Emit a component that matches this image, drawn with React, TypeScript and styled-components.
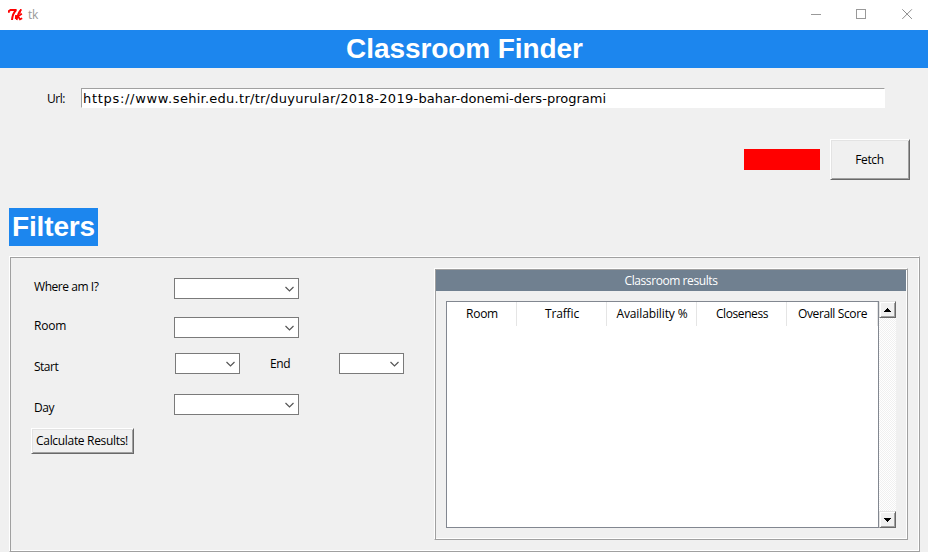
import React from "react";
import styled, { createGlobalStyle, css } from "styled-components";

const BLUE = "#1c86ee";
const FACE = "#f0f0f0";
const SHADOW = "#a0a0a0";

const GlobalStyle = createGlobalStyle`
  * { box-sizing: border-box; }
  body {
    margin: 0;
    background: ${FACE};
    color: #000;
    font: 12px/16px "Open Sans", "Noto Sans", sans-serif;
    overflow: hidden;
  }
`;

const raised = css`
  border: 1px solid;
  border-color: #fff #696969 #696969 #fff;
  box-shadow: inset 1px 1px 0 #e3e3e3, inset -1px -1px 0 ${SHADOW};
  background: ${FACE};
`;

const Window = styled.div`
  display: flex;
  flex-direction: column;
  width: 928px;
  height: 552px;
  background: ${FACE};
  overflow: hidden;
`;

const TitleBar = styled.header`
  display: flex;
  align-items: center;
  flex: none;
  height: 30px;
  padding: 0 15px 0 8px;
  background: #fff;
  color: #999;
`;

const TitleText = styled.span`
  flex: 1;
  margin-left: 5px;
  font-size: 12px;
  letter-spacing: -0.2px;
`;

const WindowControls = styled.div`
  display: grid;
  grid-template-columns: 45px 46px 11px;
  margin-top: -2px;
`;

const Banner = styled.h1`
  flex: none;
  height: 38px;
  margin: 0;
  padding-left: 1px;
  background: ${BLUE};
  color: #fff;
  font: bold 28px/38px "Liberation Sans", Arial, sans-serif;
  letter-spacing: -0.08px;
  text-align: center;
`;

const SectionTitle = styled.h2`
  flex: none;
  width: 89px;
  height: 38px;
  margin: 28px 0 0 9px;
  background: ${BLUE};
  color: #fff;
  font: bold 28px/38px "Liberation Sans", Arial, sans-serif;
  letter-spacing: -0.15px;
  text-align: center;
`;

const Label = styled.span<{ $track?: number; $drop?: number }>`
  white-space: nowrap;
  letter-spacing: ${(p) => p.$track ?? -0.35}px;
  padding-top: ${(p) => p.$drop ?? 0}px;
`;

const UrlRow = styled.div`
  display: flex;
  align-items: center;
  flex: none;
  height: 20px;
  margin: 20px 43px 0 47px;
`;

const UrlLabel = styled(Label)`
  width: 34px;
  padding-top: 2px;
`;

const Entry = styled.div`
  flex: 1;
  height: 20px;
  padding-left: 1px;
  border: 1px solid;
  border-color: ${SHADOW} #fff #fff ${SHADOW};
  background: #fff;
  font: 13px/19px "DejaVu Sans", Verdana, sans-serif;
  white-space: nowrap;
`;

const UrlPart = styled.span<{ $track: number }>`
  letter-spacing: ${(p) => p.$track}px;
`;

const FetchRow = styled.div`
  display: flex;
  align-items: center;
  justify-content: flex-end;
  flex: none;
  gap: 10px;
  height: 41px;
  margin: 31px 18px 0 0;
`;

const StatusLight = styled.div`
  width: 76px;
  height: 21px;
  background: #f00;
`;

const Button = styled.button<{ $w: number; $h: number }>`
  ${raised}
  flex: none;
  width: ${(p) => p.$w}px;
  height: ${(p) => p.$h}px;
  padding: 0 1px 0 0;
  color: inherit;
  font: inherit;
  border-radius: 0;
`;

const ridge = css`
  border: 1px solid;
  border-color: #fff ${SHADOW} ${SHADOW} #fff;
  box-shadow: inset 1px 1px 0 ${SHADOW}, inset -1px -1px 0 #fff;
`;

const FilterPanel = styled.section`
  ${ridge}
  display: flex;
  flex: none;
  justify-content: space-between;
  width: 911px;
  height: 296px;
  margin: 10px 0 0 9px;
  padding: 11px 11px 0 21px;
`;

const Form = styled.div`
  display: flex;
  flex-direction: column;
  padding-top: 10px;
`;

const Field = styled.div<{ $h: number }>`
  display: flex;
  align-items: flex-start;
  height: ${(p) => p.$h}px;
  padding-left: 3px;
`;

const FieldName = styled(Label)<{ $w: number }>`
  width: ${(p) => p.$w}px;
`;

const ComboBox = styled.div<{ $w: number }>`
  display: flex;
  align-items: center;
  justify-content: flex-end;
  width: ${(p) => p.$w}px;
  height: 21px;
  padding-right: 4px;
  border: 1px solid #7a7a7a;
  background: #fff;
`;

const EndName = styled(Label)`
  margin-left: 30px;
  width: 69px;
`;

const Results = styled.section`
  ${ridge}
  display: flex;
  flex-direction: column;
  width: 474px;
  height: 272px;
  padding: 1px;
`;

const ResultsTitle = styled.div`
  height: 21px;
  background: #708090;
  color: #fff;
  line-height: 21px;
  text-align: center;
`;

const TableArea = styled.div`
  display: flex;
  margin: 10px 10px 0 10px;
  height: 227px;
`;

const Tree = styled.div`
  display: flex;
  width: 433px;
  border: 1px solid #828790;
  background: #fff;
`;

const HeaderCell = styled.div<{ $w: number }>`
  width: ${(p) => p.$w}px;
  height: 24px;
  padding-left: 1px;
  border-right: 1px solid #e5e5e5;
  line-height: 24px;
  text-align: center;
`;

const ScrollBar = styled.div`
  display: flex;
  flex-direction: column;
  justify-content: space-between;
  width: 17px;
  background: repeating-conic-gradient(#fff 0 25%, #f0f0f0 0 50%) 0 0 / 2px 2px;
`;

const ScrollButton = styled.div`
  display: flex;
  align-items: center;
  justify-content: center;
  height: 17px;
  border: 1px solid;
  border-color: #e3e3e3 #696969 #696969 #e3e3e3;
  box-shadow: inset 1px 1px 0 #fff, inset -1px -1px 0 ${SHADOW};
  background: ${FACE};
`;

const TkLogo = () => (
  <svg width="15" height="12" viewBox="0 0 15 12" fill="none" stroke="#f00">
    <path d="M.8 3.8V2.2L2.5 1H8.6" strokeWidth="1.9" />
    <path d="M8 1.2C5.6 3.4 4.4 6.5 4 11" strokeWidth="2" />
    <path d="M13.3 .3C11.2 2.2 9.6 5 8.7 11M8 6 7.7 10" strokeWidth="1.7" />
    <path d="M13.9 4.8 10 7.3 12 10.3 14.2 9.2" strokeWidth="1.7" />
    <path d="M13 .5 11.6 5" strokeWidth="1.2" />
  </svg>
);

const Minimize = () => (
  <svg width="11" height="11" viewBox="0 0 11 11" shapeRendering="crispEdges">
    <path d="M0 5.5H10" stroke="#999" />
  </svg>
);

const Maximize = () => (
  <svg width="11" height="11" viewBox="0 0 11 11" shapeRendering="crispEdges">
    <path d="M.5 .5H9.5V9.5H.5Z" fill="none" stroke="#999" />
  </svg>
);

const Close = () => (
  <svg width="11" height="11" viewBox="0 0 11 11">
    <path d="M.3 .3 9.9 9.9M9.9 .3 .3 9.9" stroke="#8c8c8c" />
  </svg>
);

const Chevron = () => (
  <svg width="9" height="6" viewBox="0 0 9 6">
    <path d="M.5 1 4.5 4.9 8.5 1" fill="none" stroke="#555" strokeWidth="1.2" />
  </svg>
);

const Arrow = ({ up }: { up?: boolean }) => (
  <svg width="7" height="4" viewBox="0 0 7 4" shapeRendering="crispEdges">
    <path
      d={up ? "M3 0H4V1H5V2H6V3H7V4H0V3H1V2H2V1H3Z" : "M0 0H7V1H6V2H5V3H4V4H3V3H2V2H1V1H0Z"}
      fill="#000"
    />
  </svg>
);

const Combo = ({ w }: { w: number }) => (
  <ComboBox $w={w}>
    <Chevron />
  </ComboBox>
);

const columns = [
  { name: "Room", w: 70, track: -0.25 },
  { name: "Traffic", w: 90, track: -0.15 },
  { name: "Availability %", w: 90, track: -0.12 },
  { name: "Closeness", w: 90, track: -0.4 },
  { name: "Overall Score", w: 91, track: -0.38 },
];

export default function App() {
  return (
    <Window>
      <GlobalStyle />
      <TitleBar>
        <TkLogo />
        <TitleText>tk</TitleText>
        <WindowControls>
          <Minimize />
          <Maximize />
          <Close />
        </WindowControls>
      </TitleBar>
      <Banner>Classroom Finder</Banner>
      <UrlRow>
        <UrlLabel $track={-0.5}>Url:</UrlLabel>
        <Entry>
          <UrlPart $track={0.7}>https://www.</UrlPart>
          <UrlPart $track={0.265}>sehir.edu.tr/tr/duyurular/2018-2019-</UrlPart>
          <UrlPart $track={0.02}>bahar-donemi-ders-programi</UrlPart>
        </Entry>
      </UrlRow>
      <FetchRow>
        <StatusLight />
        <Button $w={80} $h={41}>
          <Label>Fetch</Label>
        </Button>
      </FetchRow>
      <SectionTitle>Filters</SectionTitle>
      <FilterPanel>
        <Form>
          <Field $h={39}>
            <FieldName $w={140} $drop={1} $track={-0.45}>Where am I?</FieldName>
            <Combo w={125} />
          </Field>
          <Field $h={36}>
            <FieldName $w={140} $drop={1} $track={-0.2}>Room</FieldName>
            <Combo w={125} />
          </Field>
          <Field $h={41}>
            <FieldName $w={141} $drop={6} $track={-0.5}>Start</FieldName>
            <Combo w={65} />
            <EndName $drop={3}>End</EndName>
            <Combo w={65} />
          </Field>
          <Field $h={34}>
            <FieldName $w={140} $drop={6} $track={-0.45}>Day</FieldName>
            <Combo w={125} />
          </Field>
          <Button $w={103} $h={26}>
            <Label $track={-0.32}>Calculate Results!</Label>
          </Button>
        </Form>
        <Results>
          <ResultsTitle>
            <Label $track={-0.42}>Classroom results</Label>
          </ResultsTitle>
          <TableArea>
            <Tree>
              {columns.map((c) => (
                <HeaderCell key={c.name} $w={c.w}>
                  <Label $track={c.track}>{c.name}</Label>
                </HeaderCell>
              ))}
            </Tree>
            <ScrollBar>
              <ScrollButton>
                <Arrow up />
              </ScrollButton>
              <ScrollButton>
                <Arrow />
              </ScrollButton>
            </ScrollBar>
          </TableArea>
        </Results>
      </FilterPanel>
    </Window>
  );
}
